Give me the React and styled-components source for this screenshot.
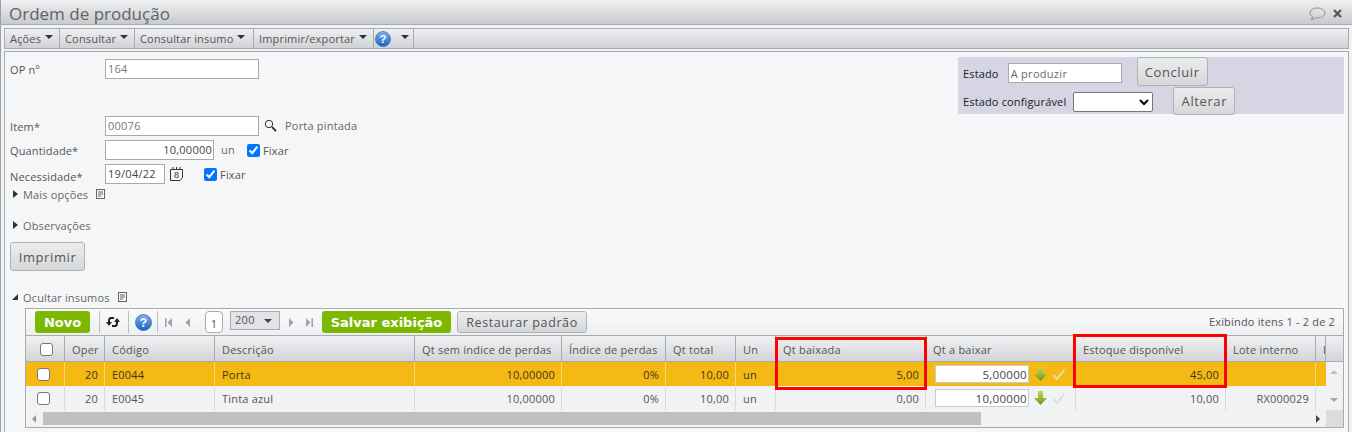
import React from "react";
import styled, { createGlobalStyle } from "styled-components";

const Global = createGlobalStyle`
  html, body { margin: 0; padding: 0; background: #f1f2f4; }
  body { font-family: "Open Sans", "Liberation Sans", sans-serif; font-size: 11px; color: #555; overflow: hidden; }
  * { box-sizing: border-box; }
`;

const Page = styled.div`
  width: 1352px; height: 432px; display: flex; flex-direction: column; overflow: hidden;
  border-left: 1px solid #9aa0a8;
`;
const TitleBar = styled.div`
  height: 25px; flex: none; display: flex; align-items: center; justify-content: space-between;
  padding: 3px 10px 0 8px; background: linear-gradient(#eff0f1, #c8cace); border-bottom: 1px solid #a6abb2;
`;
const Title = styled.div`font-size: 17px; letter-spacing: 0; color: #5f6368;`;
const TitleIcons = styled.div`display: flex; align-items: center; gap: 7px;`;
const ToolBar = styled.div`
  margin: 3px 3px 0 3px; height: 21px; flex: none; display: flex; border: 1px solid #a6abb2;
  background: linear-gradient(#eff0f1, #cfd1d5);
`;
const MenuItem = styled.div`
  width: ${p => p.$w}px; display: flex; align-items: center; gap: ${p => p.$gap || 4}px; padding-left: ${p => p.$pl ?? 5}px; color: #555; font-size: 11px;
  border-right: 1px solid #a6abb2; white-space: nowrap; letter-spacing: .17px;
`;
const Caret = styled.span`
  display: inline-block; width: 0; height: 0; border-left: 4px solid transparent; border-right: 4px solid transparent;
  border-top: 4px solid ${p => p.$c || "#333"}; margin-bottom: ${p => p.$mb ?? 3}px;
`;
const Panel = styled.div`
  flex: 1; margin: 2px 3px 0 3px; border: 1px solid #a6abb2; border-bottom: none; background: #f5f6f7;
  display: flex; flex-direction: column; padding: 4px 4px 0 5px; min-height: 0;
`;
const FormTop = styled.div`display: flex; justify-content: space-between; height: 124px;`;
const FormLeft = styled.div`display: flex; flex-direction: column; padding-top: 3px;`;
const FormRow = styled.div`
  display: flex; align-items: center; height: 19px; margin-top: ${p => p.$mt || 0}px;
`;
const Label = styled.label`width: 95px; flex: none; font-size: 11px; color: #555; letter-spacing: .15px; padding-top: ${p => p.$pt || 2}px;`;
const TextInput = styled.div`
  width: ${p => p.$w}px; height: 20px; border: 1px solid #a9a9a9; background: #fff; padding: 0 1px 1px 2px; display: flex; align-items: center;
  justify-content: ${p => p.$right ? "flex-end" : "flex-start"}; font-size: 11px; color: ${p => p.$dark ? "#444" : "#777"}; letter-spacing: .25px;
`;
const Hint = styled.span`margin-left: ${p => p.$ml}px; font-size: 11px; color: #666; letter-spacing: .2px;`;
const Check = styled.input.attrs({ type: "checkbox", defaultChecked: true, readOnly: true })`
  width: 13px; height: 13px; margin: 1px 3px 0 ${p => p.$ml}px; accent-color: #0075ff;
`;
const Fixar = styled.span`font-size: 11px; color: #555; padding-top: 2px; letter-spacing: .2px;`;
const Estado = styled.div`
  width: 386px; height: 57px; background: #d6d5e3; margin: 1px 0 0 0; display: flex; flex-direction: column; color: #222;
  padding: 0 0 0 5px;
`;
const EstadoRow = styled.div`display: flex; align-items: center; height: 29px; &:last-child { height: 28px; }`;
const EstadoLabel = styled.span`font-size: 11px; color: #222; margin-right: ${p => p.$mr}px; padding-top: 3px; letter-spacing:.15px;`;
const EstadoInput = styled.div`
  width: 114px; height: 20px; border: 1px solid #a9a9a9; background: #fff; color: #6b6b6b; padding-left: 2px; display: flex; align-items: center;
  font-size: 11px; letter-spacing:.3px; margin-top: 3px;
`;
const NativeSelect = styled.select`
  width: 80px; height: 20px; margin-top: 3px; background: #fff; border: 1px solid #767676; border-radius: 2px;
`;
const GreyButton = styled.div`
  width: ${p => p.$w}px; height: ${p => p.$h}px; margin-left: ${p => p.$ml || 0}px; margin-top: ${p => p.$mt || 0}px; border: 1px solid #aeb2b8; border-radius: 3px;
  background: linear-gradient(#eceded, #d5d7da); display: flex; align-items: center; justify-content: center;
  font-size: ${p => p.$fs || 13}px; color: #555; letter-spacing: .6px; flex: none;
`;
const Toggle = styled.div`
  display: flex; align-items: center; height: 16px; margin-top: ${p => p.$mt}px; padding-left: 3px; font-size: 11px; color: #666; letter-spacing: .15px;
`;
const Arrow = styled.span`
  width: 0; height: 0; margin-right: 5px; flex: none;
  border-top: 4px solid transparent; border-bottom: 4px solid transparent; border-left: 5px solid #333;
`;
const ArrowDown = styled.span`
  width: 0; height: 0; margin: 0 5px 0 -1px; flex: none; border-left: 6px solid transparent; border-bottom: 6px solid #333;
`;
const Grid = styled.div`
  position: relative; margin: 3px 0 0 15px; width: 1319px; height: 120px; flex: none; border: 1px solid #a6abb2; background: #f1f2f4;
  display: flex; flex-direction: column;
`;
const GridTools = styled.div`
  height: 27px; flex: none; display: flex; align-items: center; padding-left: 9px; background: linear-gradient(#fafafa, #eeeff1); border-bottom: 1px solid #a6abb2;
`;
const GreenButton = styled.div`
  width: ${p => p.$w}px; height: 22px; border-radius: 3px; background: #7cb800; color: #fff; font-weight: 700; font-family: "DejaVu Sans", sans-serif; font-size: 13px;
  display: flex; align-items: center; justify-content: center; flex: none; margin-left: ${p => p.$ml || 0}px;
`;
const Sep = styled.span`width: 1px; height: 22px; background: #b9bcc1; margin-left: ${p => p.$ml}px; flex: none;`;
const ToolIcon = styled.span`display: flex; margin-left: ${p => p.$ml}px; flex: none;`;
const PageBox = styled.div`
  width: 18px; height: 22px; margin-left: ${p => p.$ml}px; border: 1px solid #a9adb3; border-radius: 4px; background: #fff; display: flex; align-items: center; justify-content: center; font-size: 11px; color: #555; flex: none; padding-top: 2px;
`;
const PerPage = styled.div`
  width: 50px; height: 19px; margin: 0 0 3px 7px; border: 1px solid #a9adb3; background: #e2e3e6; display: flex; align-items: center; justify-content: space-between; padding: 0 7px 3px 4px; font-size: 11px; color: #555; flex: none; letter-spacing: .3px;
`;
const Showing = styled.div`margin-left: auto; padding: 0 8px 2px 0; font-size: 11px; color: #555; letter-spacing: .18px;`;

const cols = "39px 40px 110px 200px 147px 104px 70px 40px 150px 150px 150px 90px 10px 17px";
const HeadRow = styled.div`
  height: 26px; flex: none; display: grid; grid-template-columns: ${cols}; background: linear-gradient(#f0f1f2, #d2d4d8);
  border-bottom: 1px solid #a6abb2;
`;
const HeadCell = styled.div`
  display: flex; align-items: center; padding: 1px 0 0 ${p => p.$pl ?? 7}px; border-right: 1px solid ${p => p.$none ? "transparent" : "#a6abb2"}; font-size: 11px; color: #555; white-space: nowrap; overflow: hidden; letter-spacing: .22px;
  justify-content: ${p => p.$center ? "center" : "flex-start"};
`;
const Row = styled.div`
  height: 24px; display: grid; grid-template-columns: ${cols}; color: ${p => p.$sel ? "#3d3520" : "#555"};
`;
const Cell = styled.div`
  display: flex; align-items: center; padding: 0 ${p => p.$pr ?? 6}px 0 ${p => p.$pl ?? 7}px; font-size: 11px; letter-spacing: .2px; white-space: nowrap; overflow: hidden;
  justify-content: ${p => p.$right ? "flex-end" : p.$center ? "center" : "flex-start"};
  background: ${p => p.$sel ? "#f5b914" : "transparent"};
  border-right: 1px solid ${p => p.$sel ? "#f9d978" : "#d8dadd"};
`;
const ScrollCell = styled.div`background: #f1f2f4;`;
const GridBox = styled.input.attrs({ type: "checkbox", readOnly: true })`
  appearance: none; width: 13px; height: 13px; margin: 0; background: #fff; border: 1px solid #777; border-radius: 3px;
`;
const QtyInput = styled.div`
  width: 94px; height: 18px; margin-left: 4px; background: #fff; border: 1px solid #c8cacd; display: flex; align-items: center; justify-content: flex-end; color: #444; font-size: 11.5px; letter-spacing: .3px; padding-right: 1px; flex: none;
`;
const HScroll = styled.div`
  height: 15px; margin-top: 1px; display: flex; align-items: center; padding-left: 6px; position: relative;
`;
const ScrollThumb = styled.div`width: 938px; height: 13px; background: #c0c0c0; margin-left: 7px;`;
const ScrollCorner = styled.div`position: absolute; right: 0; top: -1px; width: 17px; height: 17px; background: #dcdcdc;`;
const ScrollRight = styled.span`
  position: absolute; right: 23px; top: 4px; width: 0; height: 0; border-top: 4px solid transparent; border-bottom: 4px solid transparent; border-left: 4px solid #444;
`;
const ScrollLeft = styled.span`
  width: 0; height: 0; border-top: 4px solid transparent; border-bottom: 4px solid transparent; border-right: 4px solid #999;
`;
const VArrow = styled.span`
  position: absolute; right: 5px; top: ${p => p.$top}px; width: 0; height: 0; border-left: 4px solid transparent; border-right: 4px solid transparent;
  ${p => p.$up ? "border-bottom: 4px solid #c4c4c4;" : "border-top: 4px solid #a4a4a4;"}
`;
const RedBox = styled.div`
  position: absolute; left: ${p => p.$l}px; top: ${p => p.$t}px; width: ${p => p.$w}px; height: ${p => p.$h}px; border: 3px solid #f00; pointer-events: none;
`;

const Help = ({ s = 17 }) => (
  <svg width={s} height={s} viewBox="0 0 17 17">
    <defs><linearGradient id="hg" x1="0" y1="0" x2="0" y2="1"><stop offset="0" stopColor="#7fb1ea" /><stop offset="1" stopColor="#1b62c4" /></linearGradient></defs>
    <circle cx="8.5" cy="8.5" r="8" fill="url(#hg)" stroke="#2a62b0" strokeWidth=".7" />
    <text x="8.5" y="13" textAnchor="middle" fontFamily="Liberation Sans" fontWeight="700" fontSize="12" fill="#fff">?</text>
  </svg>
);
const Bubble = () => (
  <svg width="17" height="14" viewBox="0 0 17 14" fill="none" stroke="#8a8d92" strokeWidth="1">
    <path d="M8.5 1C4.4 1 1 3.1 1 6c0 1.500 1 2.800 2.400 3.600L2.500 13l3.800-2.300c.7.100 1.400.2 2.200.2 4.100 0 7.500-2.100 7.500-4.900S12.600 1 8.500 1z" />
  </svg>
);
const Close = () => (
  <svg width="9" height="9" viewBox="0 0 9 9" stroke="#555" strokeWidth="2.200"><path d="M1 1l7 7M8 1L1 8" /></svg>
);
const Search = () => (
  <svg width="13" height="13" viewBox="0 0 13 13" fill="none" stroke="#333">
    <circle cx="5" cy="5" r="3.700" strokeWidth="1" /><path d="M8 8l4 4" strokeWidth="1.800" />
  </svg>
);
const Calendar = () => (
  <svg width="13" height="14" viewBox="0 0 13 14" fill="none" stroke="#333" strokeWidth="1">
    <path d="M.5 2.500h12v8l-2.500 3H.5z" /><path d="M3 0v3M6.500 0v3M10 0v3" strokeWidth="1" />
    <text x="6.500" y="11" textAnchor="middle" fontFamily="Liberation Sans" fontSize="9" fill="#333" stroke="none">8</text>
  </svg>
);
const Doc = () => (
  <svg width="9" height="10" viewBox="0 0 9 10" fill="none" stroke="#666" strokeWidth="1"><rect x=".5" y=".5" width="8" height="9" /><path d="M2 3h5M2 5h5M2 7h3" /></svg>
);
const Refresh = () => (
  <svg width="14" height="12" viewBox="0 0 14 12" fill="none" stroke="#222" strokeWidth="2">
    <path d="M8 2H5C3.500 2 3 3.500 3 5v2" /><path d="M0 6l3 4 3-4z" fill="#222" stroke="none" />
    <path d="M6 10h3c1.500 0 2-1.500 2-3V5" /><path d="M8 6l3-4 3 4z" fill="#222" stroke="none" />
  </svg>
);
const PagerIcon = ({ d }) => (
  <svg width="8" height="9" viewBox="0 0 8 9" fill="#a0a4a9"><path d={d} /></svg>
);
const DownArrow = () => (
  <svg width="13" height="16" viewBox="0 0 13 16">
    <defs><linearGradient id="ga" x1="0" y1="0" x2="0" y2="1"><stop offset="0" stopColor="#c9d95a" /><stop offset="1" stopColor="#5f9a1a" /></linearGradient></defs>
    <path d="M4 1h5v7h4l-6.500 7L0 8h4z" fill="url(#ga)" />
  </svg>
);
const Tick = ({ c }) => (
  <svg width="14" height="13" viewBox="0 0 14 13" fill="none" stroke={c} strokeWidth="2"><path d="M1.500 7l3.500 4L12.500 1.500" /></svg>
);

const heads = ["Oper", "Código", "Descrição", "Qt sem índice de perdas", "Índice de perdas", "Qt total", "Un", "Qt baixada", "Qt a baixar", "Estoque disponível", "Lote interno", "L"];

const rows = [
  { sel: true, cod: "E0044", desc: "Porta", baixada: "5,00", qty: "5,00000", est: "45,00", lote: "", tick: "#e3dcb8" },
  { sel: false, cod: "E0045", desc: "Tinta azul", baixada: "0,00", qty: "10,00000", est: "10,00", lote: "RX000029", tick: "#dcdedf" },
];

export default function App() {
  return (
    <Page>
      <Global />
      <TitleBar>
        <Title>Ordem de produção</Title>
        <TitleIcons><Bubble /><Close /></TitleIcons>
      </TitleBar>
      <ToolBar>
        <MenuItem $w={55}>Ações <Caret /></MenuItem>
        <MenuItem $w={75}>Consultar <Caret /></MenuItem>
        <MenuItem $w={119}>Consultar insumo <Caret /></MenuItem>
        <MenuItem $w={120}>Imprimir/exportar <Caret /></MenuItem>
        <MenuItem $w={40} $pl={1} $gap={10}><Help s={16} /><Caret /></MenuItem>
      </ToolBar>
      <Panel>
        <FormTop>
          <FormLeft>
            <FormRow><Label>OP nº</Label><TextInput $w={154}>164</TextInput></FormRow>
            <FormRow $mt={38}><Label>Item*</Label><TextInput $w={154}>00076</TextInput><ToolIcon $ml={5}><Search /></ToolIcon><Hint $ml={8}>Porta pintada</Hint></FormRow>
            <FormRow $mt={5}><Label>Quantidade*</Label><TextInput $w={109} $right $dark>10,00000</TextInput><Hint $ml={7}>un</Hint><Check $ml={12} /><Fixar>Fixar</Fixar></FormRow>
            <FormRow $mt={5}><Label $pt={6}>Necessidade*</Label><TextInput $w={60} $dark>19/04/22</TextInput><ToolIcon $ml={5}><Calendar /></ToolIcon><Check $ml={21} /><Fixar>Fixar</Fixar></FormRow>
          </FormLeft>
          <Estado>
            <EstadoRow>
              <EstadoLabel $mr={9}>Estado</EstadoLabel><EstadoInput>A produzir</EstadoInput><GreyButton $w={71} $h={29} $ml={15}>Concluir</GreyButton>
            </EstadoRow>
            <EstadoRow>
              <EstadoLabel $mr={7}>Estado configurável</EstadoLabel><NativeSelect /><GreyButton $w={62} $h={28} $ml={20} $mt={1}>Alterar</GreyButton>
            </EstadoRow>
          </Estado>
        </FormTop>
        <Toggle $mt={6}><Arrow />Mais opções<ToolIcon $ml={8}><Doc /></ToolIcon></Toggle>
        <Toggle $mt={15}><Arrow />Observações</Toggle>
        <GreyButton $w={75} $h={29} $mt={9}>Imprimir</GreyButton>
        <Toggle $mt={18}><ArrowDown />Ocultar insumos<ToolIcon $ml={8}><Doc /></ToolIcon></Toggle>
        <Grid>
          <GridTools>
            <GreenButton $w={55}>Novo</GreenButton>
            <Sep $ml={9} />
            <ToolIcon $ml={6}><Refresh /></ToolIcon>
            <Sep $ml={8} />
            <ToolIcon $ml={6}><Help s={17} /></ToolIcon>
            <Sep $ml={5} />
            <ToolIcon $ml={7}><PagerIcon d="M0 0h1.500v9H0zM7 0v9L2.500 4.500z" /></ToolIcon>
            <ToolIcon $ml={11}><PagerIcon d="M6 0v9L1.500 4.500z" /></ToolIcon>
            <PageBox $ml={13}>1</PageBox>
            <PerPage>200<Caret $c="#444" $mb={0} style={{ marginTop: 3 }} /></PerPage>
            <ToolIcon $ml={7}><PagerIcon d="M2 0v9l4.500-4.500z" /></ToolIcon>
            <ToolIcon $ml={10}><PagerIcon d="M8 0H6.500v9H8zM1 0v9l4.500-4.500z" /></ToolIcon>
            <GreenButton $w={129} $ml={9}>Salvar exibição</GreenButton>
            <GreyButton $w={130} $h={22} $ml={6} $fs={12.5}>Restaurar padrão</GreyButton>
            <Showing>Exibindo itens 1 - 2 de 2</Showing>
          </GridTools>
          <HeadRow>
            <HeadCell $center $pl={3}><GridBox /></HeadCell>
            {heads.map(h => <HeadCell key={h}>{h}</HeadCell>)}
            <HeadCell $none />
          </HeadRow>
          {rows.map(r => (
            <Row key={r.cod} $sel={r.sel}>
              <Cell $center $pl={0} $pr={4} $sel={r.sel}><GridBox /></Cell>
              <Cell $right $sel={r.sel}>20</Cell>
              <Cell $sel={r.sel}>{r.cod}</Cell>
              <Cell $sel={r.sel}>{r.desc}</Cell>
              <Cell $right $sel={r.sel}>10,00000</Cell>
              <Cell $right $sel={r.sel}>0%</Cell>
              <Cell $right $sel={r.sel}>10,00</Cell>
              <Cell $sel={r.sel}>{"un"}</Cell>
              <Cell $right $sel={r.sel}>{r.baixada}</Cell>
              <Cell $pl={5} $pr={0} $sel={r.sel}><QtyInput>{r.qty}</QtyInput><ToolIcon $ml={5}><DownArrow /></ToolIcon><ToolIcon $ml={5}><Tick c={r.tick} /></ToolIcon></Cell>
              <Cell $right $sel={r.sel}>{r.est}</Cell>
              <Cell $right $sel={r.sel}>{r.lote}</Cell>
              <Cell $sel={r.sel} />
              <ScrollCell />
            </Row>
          ))}
          <VArrow $up $top={61} />
          <VArrow $top={89} />
          <HScroll><ScrollLeft /><ScrollThumb /><ScrollRight /><ScrollCorner /></HScroll>
          <RedBox $l={749} $t={28} $w={152} $h={53} />
          <RedBox $l={1047} $t={25} $w={154} $h={54} />
        </Grid>
      </Panel>
    </Page>
  );
}
